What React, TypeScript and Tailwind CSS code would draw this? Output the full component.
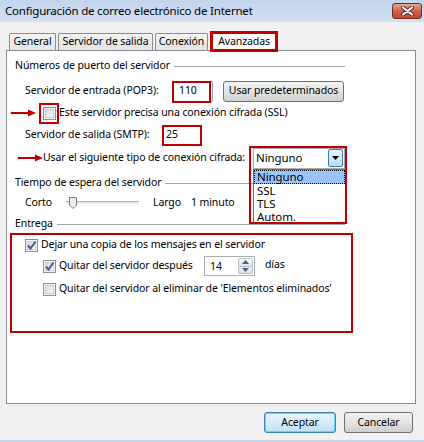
import React from "react";

const Arrow = () => (
  <svg width="26" height="8" viewBox="0 0 26 8" className="shrink-0">
    <circle cx="2" cy="4" r="1.3" fill="#c00000" />
    <line x1="2" y1="4" x2="19" y2="4" stroke="#c00000" strokeWidth="2" />
    <polygon points="18,0.5 26,4 18,7.5" fill="#c00000" />
  </svg>
);

const Check = ({ checked }: { checked?: boolean }) => (
  <span className="relative flex h-[13px] w-[13px] shrink-0 items-center justify-center border border-[#8e8f8f] bg-[#f4f4f4]">
    <span className="h-[9px] w-[9px] border border-[#cfcfcf] bg-gradient-to-br from-[#d8d8d8] to-[#fbfbfb]" />
    {checked && (
      <svg width="11" height="11" viewBox="0 0 11 11" className="absolute left-[0px] top-[0px]">
        <path d="M2 5.5 L4.5 8.5 L9.5 1.5" fill="none" stroke="#4a5c96" strokeWidth="2" />
      </svg>
    )}
  </span>
);

const GroupLabel = ({ label, className }: { label: string; className?: string }) => (
  <div className={"ml-[8px] flex h-[16px] w-[330px] items-center " + (className ?? "")}>
    <span className="whitespace-nowrap">{label}</span>
    <span className="ml-[4px] h-px flex-1 bg-[#a5a5a5]" />
  </div>
);

const Tab = ({ label, w }: { label: string; w: string }) => (
  <div
    className={
      "flex h-[17px] items-center justify-center whitespace-nowrap rounded-t-[2px] border border-b-0 border-[#898c95] bg-gradient-to-b from-[#f3f3f3] to-[#e3e3e3] " +
      w
    }
  >
    {label}
  </div>
);

const Slider = () => (
  <div className="relative h-[16px] w-[73px]">
    <div className="absolute left-0 right-0 top-[6px] h-[3px] border-t border-[#b4b4b4] bg-[#e7eaea]" />
    <svg width="8" height="12" viewBox="0 0 8 12" className="absolute left-[3px] top-[2px]">
      <path d="M0.5 0.5 H7.5 V8 L4 11.5 L0.5 8 Z" fill="#eeeeee" stroke="#7b7b7b" />
    </svg>
  </div>
);

export default function App() {
  return (
    <div className="flex h-[442px] w-[424px] flex-col overflow-hidden border-b-2 border-[#c3d5e9] bg-[#f0f0f0] font-['Noto_Sans',sans-serif] text-[10.5px] tracking-[-0.1px] text-black">
      {/* title bar */}
      <div className="flex h-[22px] items-start justify-between bg-gradient-to-b from-[#c2d5ec] to-[#d3e1f2]">
        <span className="pl-[5px] pt-[3px] text-[11.5px] leading-[16px] tracking-[-0.2px]">
          Configuración de correo electrónico de Internet
        </span>
        <div className="mr-[2px] mt-[3px] flex h-[16px] w-[30px] items-center justify-center rounded-[3px] border border-[#6b2d24] bg-gradient-to-b from-[#e8a593] via-[#d2604a] to-[#c4442e]">
          <svg width="13" height="10" viewBox="0 0 13 10">
            <path d="M2 1.5 L11 8.5 M11 1.5 L2 8.5" stroke="#5a2a22" strokeWidth="4" strokeLinecap="round" />
            <path d="M2 1.5 L11 8.5 M11 1.5 L2 8.5" stroke="#ffffff" strokeWidth="2.2" strokeLinecap="round" />
          </svg>
        </div>
      </div>

      {/* tabs */}
      <div className="mt-[9px] flex h-[19px] items-end gap-[2px] pl-[9px]">
        <Tab label="General" w="w-[47px]" />
        <Tab label="Servidor de salida" w="w-[95px]" />
        <Tab label="Conexión" w="w-[53px]" />
        <div className="relative z-10 -mb-[2px] flex h-[21px] w-[68px] items-center justify-center border-[3px] border-[#c00000] bg-white">
          Avanzadas
        </div>
      </div>

      {/* panel */}
      <div className="ml-[6px] flex h-[354px] w-[410px] flex-col whitespace-nowrap border border-[#898c95] bg-white">
        <GroupLabel label="Números de puerto del servidor" className="mt-[7px]" />

        <div className="mt-[6px] flex h-[22px] items-center">
          <span className="w-[166px] pl-[18px]">Servidor de entrada (POP3):</span>
          <div className="relative flex h-[21px] w-[40px] items-center border border-[#abadb3] pl-[5px]">
            110
            <span className="absolute -left-[2px] -top-[1px] h-[22px] w-[39px] border-2 border-[#c00000]" />
          </div>
          <button className="ml-[10px] flex h-[21px] w-[121px] items-center justify-center rounded-[3px] border border-[#707070] bg-gradient-to-b from-[#f2f2f2] via-[#e4e4e4] to-[#cfcfcf]">
            Usar predeterminados
          </button>
        </div>

        <div className="flex h-[22px] items-center pl-[3px]">
          <Arrow />
          <span className="ml-[3px] flex h-[21px] w-[20px] items-center justify-center border-2 border-[#c00000]">
            <Check />
          </span>
          <span>Este servidor precisa una conexión cifrada (SSL)</span>
        </div>

        <div className="flex h-[22px] items-center">
          <span className="w-[155px] pl-[18px]">Servidor de salida (SMTP):</span>
          <span className="flex h-[21px] w-[40px] items-center border-2 border-[#c00000] pl-[2px]">25</span>
        </div>

        <div className="mt-[1px] flex h-[22px] items-center">
          <div className="flex w-[246px] items-center pl-[10px]">
            <Arrow />
            <span>Usar el siguiente tipo de conexión cifrada:</span>
          </div>
          <div className="relative h-[21px] w-[92px]">
            <div className="flex h-[21px] items-center justify-between border border-[#abadb3] pl-[2px] pr-[1px] text-[11.5px]">
              <span>Ninguno</span>
              <span className="flex h-[18px] w-[15px] items-center justify-center rounded-[2px] border border-[#3c7fb1] bg-gradient-to-b from-[#eaf6fd] to-[#b6dcf5]">
                <svg width="7" height="4" viewBox="0 0 7 4">
                  <polygon points="0,0 7,0 3.5,4" fill="#000" />
                </svg>
              </span>
            </div>
            <div className="absolute left-0 top-[21px] z-20 w-[93px] border border-[#6e6e6e] bg-white text-[11.5px]">
              <div className="h-[14px] border border-dotted border-black bg-[#99c4f8] pl-[2px] leading-[12px]">Ninguno</div>
              <div className="h-[13px] pl-[3px] leading-[13px]">SSL</div>
              <div className="h-[13px] pl-[3px] leading-[13px]">TLS</div>
              <div className="h-[13px] pl-[3px] leading-[13px]">Autom.</div>
            </div>
            <span className="absolute -left-[4px] -top-[2px] z-30 h-[78px] w-[98px] border-2 border-[#c00000]" />
          </div>
        </div>

        <GroupLabel label="Tiempo de espera del servidor" className="mt-[6px]" />

        <div className="mt-[4px] flex h-[16px] items-center">
          <span className="w-[59px] pl-[18px]">Corto</span>
          <Slider />
          <span className="ml-[14px] w-[38px]">Largo</span>
          <span>1 minuto</span>
        </div>

        <GroupLabel label="Entrega" className="mt-[5px]" />

        <div className="ml-[3px] mt-[1px] flex h-[100px] w-[343px] flex-col border-2 border-[#c00000]">
          <div className="mt-[2px] flex h-[16px] items-center gap-[3px] pl-[13px]">
            <Check checked />
            <span>Dejar una copia de los mensajes en el servidor</span>
          </div>
          <div className="mt-[3px] flex h-[20px] items-center pl-[31px]">
            <Check checked />
            <span className="ml-[3px] w-[145px]">Quitar del servidor después</span>
            <div className="flex h-[20px] w-[51px] border border-[#abadb3]">
              <span className="flex flex-1 items-center pl-[5px] pt-[2px]">14</span>
              <div className="my-[1px] mr-[1px] flex w-[15px] flex-col">
                <span className="flex flex-1 items-center justify-center rounded-t-[2px] border border-[#b5bfcc] bg-gradient-to-b from-[#f7f7f7] to-[#e2e6ea]">
                  <svg width="7" height="4" viewBox="0 0 7 4">
                    <polygon points="0,4 7,4 3.5,0" fill="#4d6185" />
                  </svg>
                </span>
                <span className="flex flex-1 items-center justify-center rounded-b-[2px] border border-t-0 border-[#b5bfcc] bg-gradient-to-b from-[#f0f0f0] to-[#dde2e7]">
                  <svg width="7" height="4" viewBox="0 0 7 4">
                    <polygon points="0,0 7,0 3.5,4" fill="#4d6185" />
                  </svg>
                </span>
              </div>
            </div>
            <span className="mb-[3px] ml-[10px]">días</span>
          </div>
          <div className="mt-[5px] flex h-[16px] items-center pl-[31px]">
            <Check />
            <span className="ml-[3px]">Quitar del servidor al eliminar de 'Elementos eliminados'</span>
          </div>
        </div>
      </div>

      {/* buttons */}
      <div className="mt-[8px] flex justify-end gap-[8px] pr-[11px]">
        <button className="flex h-[21px] w-[72px] items-center justify-center rounded-[3px] border border-[#3c7fb1] bg-gradient-to-b from-[#ecf5fc] via-[#d6ebfa] to-[#bde0f7] shadow-[inset_0_0_0_1px_#6fd0f5]">
          Aceptar
        </button>
        <button className="flex h-[21px] w-[69px] items-center justify-center rounded-[3px] border border-[#707070] bg-gradient-to-b from-[#f2f2f2] via-[#e4e4e4] to-[#cfcfcf]">
          Cancelar
        </button>
      </div>
    </div>
  );
}
